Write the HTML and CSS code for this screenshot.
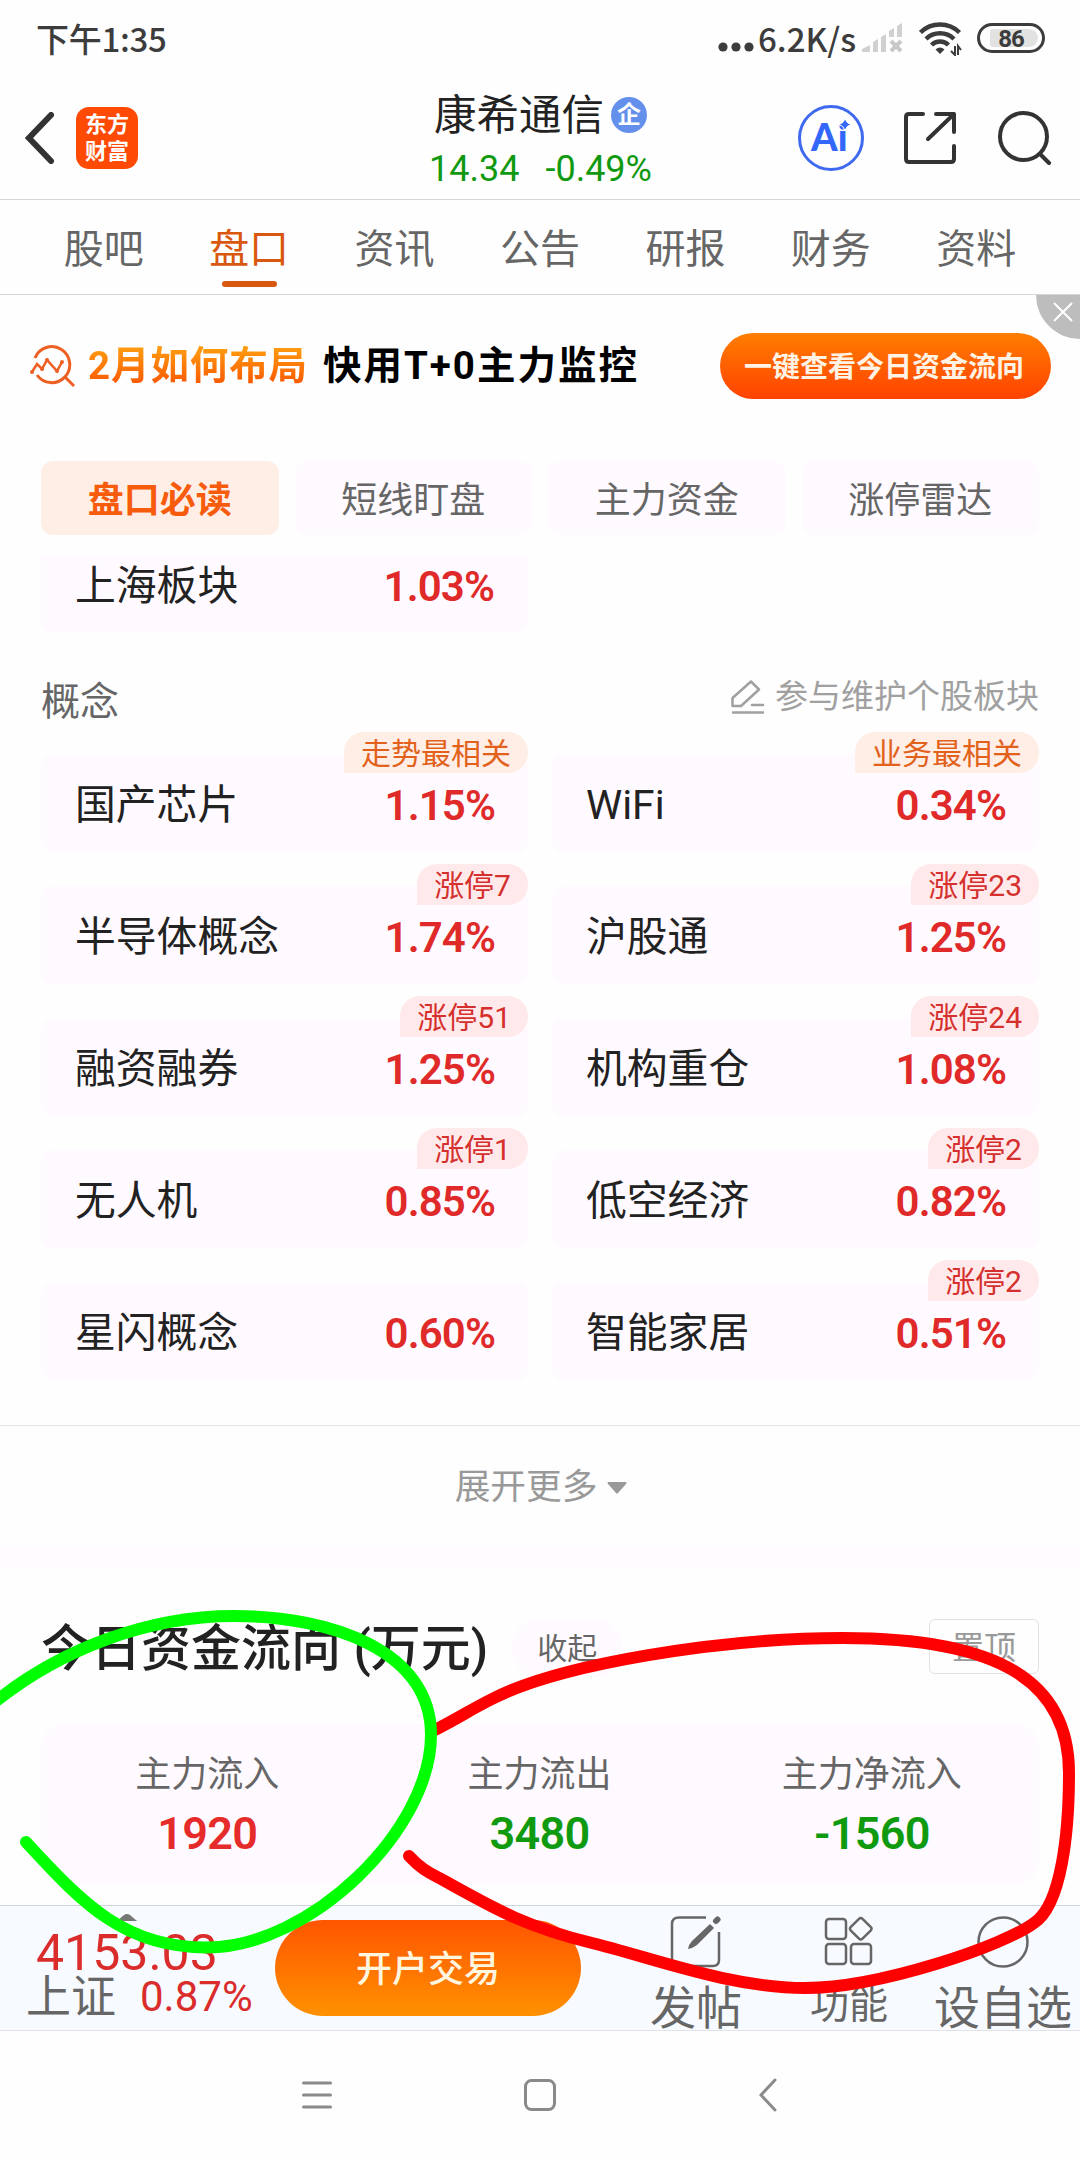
FILE: index.html
```html
<!DOCTYPE html>
<html lang="zh-CN">
<head>
	<meta charset="UTF-8">
	<meta name="viewport" content="width=device-width, initial-scale=1.0">
	<title>康希通信</title>
	<link rel="stylesheet" href="styles.css">
</head>
<body>
	<div class="status-bar">
		<span class="time">下午1:35</span>
		<div class="status-right">
			<svg class="dots" width="36" height="10" viewBox="0 0 36 10"><circle cx="5" cy="5" r="4.6"/><circle cx="18" cy="5" r="4.6"/><circle cx="31" cy="5" r="4.6"/></svg>
			<span class="speed">6.2K/s</span>
			<svg class="signal" width="41" height="30" viewBox="0 0 41 30">
				<path d="M0 29v-3l8-4v7zM11 29V19l5-3v13zM19 29V14l5-3v18zM27 14V8l5-3v9zM35 14V3l5-3v14z" fill="#d0d0d0"/>
				<path d="M29 18l10 10M39 18l-10 10" stroke="#c8c8c8" stroke-width="4"/>
			</svg>
			<svg class="wifi" width="43" height="34" viewBox="0 0 43 34" fill="none" stroke="#3c3c3c" stroke-width="4.5">
				<path d="M1.500 10.500A28 28 0 0 1 40.500 10.500M7 17A20 20 0 0 1 35 17M12.500 23A12 12 0 0 1 29.500 23"/>
				<path d="M16.500 27.500Q21 23.500 25.500 27.500L21 32z" fill="#3c3c3c" stroke="none"/>
				<path d="M36 24v9l-4-4M39 33v-9l3 4" stroke-width="2"/>
			</svg>
			<span class="battery"><span class="battery-fill">86</span></span>
		</div>
	</div>

	<header class="header">
		<div class="header-left">
			<svg width="30" height="52" viewBox="0 0 30 52" fill="none" stroke="#333" stroke-width="6" stroke-linecap="round" stroke-linejoin="miter"><path d="M26 3L4 26l22 23"/></svg>
			<div class="logo"><span>东方</span><span>财富</span></div>
		</div>
		<div class="stock">
			<div class="stock-name">康希通信<span class="ent">企</span></div>
			<div class="stock-price"><span>14.34</span><span>-0.49%</span></div>
		</div>
		<div class="header-right">
			<svg class="ai" width="66" height="66" viewBox="0 0 66 66">
				<circle cx="33" cy="33" r="31.500" fill="none" stroke="#3f6af0" stroke-width="3"/>
				<text x="13" y="46" font-size="38">Ai</text>
				<path d="M47 13.500q1.500 5 6 6q-4.500 1-6 6q-1.500-5-6-6q4.500-1 6-6z" fill="#3366fa" stroke="#fff" stroke-width="1"/>
			</svg>
			<svg class="share" width="54" height="54" viewBox="0 0 54 54" fill="none" stroke="#333" stroke-width="4" stroke-linecap="round" stroke-linejoin="round"><path d="M20 3H6Q3 3 3 6v42q0 3 3 3h42q3 0 3-3V35M33 3h18v18M51 3L25 28"/></svg>
			<svg class="search" width="54" height="54" viewBox="0 0 54 54" fill="none" stroke="#333" stroke-width="4" stroke-linecap="round"><circle cx="25.500" cy="25.500" r="23.500"/><path d="M42 43l9 9"/></svg>
		</div>
	</header>

	<nav class="tabs">
		<a>股吧</a>
		<a class="active">盘口</a>
		<a>资讯</a>
		<a>公告</a>
		<a>研报</a>
		<a>财务</a>
		<a>资料</a>
	</nav>

	<div class="banner">
		<svg class="banner-icon" width="46" height="44" viewBox="0 0 46 44" fill="none" stroke="#ee6022" stroke-width="3">
			<path d="M5 14A18 18 0 1 1 7 31M35 33l9 9"/>
			<path d="M2 28l5-8 5 5 5-9 10 11 5-9" stroke-width="2.500"/>
			<g fill="#ee6022" stroke="none"><circle cx="2" cy="28" r="2"/><circle cx="12" cy="25" r="2"/><circle cx="17" cy="16" r="2"/><circle cx="27" cy="27" r="2"/><circle cx="32" cy="18" r="2"/></g>
		</svg>
		<span class="banner-hot">2月如何布局</span>
		<span class="banner-text">快用T+0主力监控</span>
		<span class="banner-btn">一键查看今日资金流向</span>
		<span class="banner-close"><svg width="20" height="20" viewBox="0 0 20 20" stroke="#fff" stroke-width="2"><path d="M1 1l18 18M19 1L1 19"/></svg></span>
	</div>

	<div class="sub-tabs">
		<span class="active">盘口必读</span>
		<span>短线盯盘</span>
		<span>主力资金</span>
		<span>涨停雷达</span>
	</div>

	<div class="region">
		<div class="card cut"><span>上海板块</span><b>1.03%</b></div>
	</div>

	<div class="section-head">
		<span class="section-name">概念</span>
		<span class="edit">
			<svg width="34" height="34" viewBox="0 0 34 34" fill="none" stroke="#a0a0a0" stroke-width="2.500" stroke-linecap="round" stroke-linejoin="round"><path d="M1.500 26v-8L20 1.500l8 8L10 26zM21 25h11M2 32.500h30"/></svg>
			参与维护个股板块
		</span>
	</div>

	<div class="cards">
		<div class="card"><span>国产芯片</span><b>1.15%</b><i class="tag hot">走势最相关</i></div>
		<div class="card"><span>WiFi</span><b>0.34%</b><i class="tag hot">业务最相关</i></div>
		<div class="card"><span>半导体概念</span><b>1.74%</b><i class="tag">涨停7</i></div>
		<div class="card"><span>沪股通</span><b>1.25%</b><i class="tag">涨停23</i></div>
		<div class="card"><span>融资融券</span><b>1.25%</b><i class="tag">涨停51</i></div>
		<div class="card"><span>机构重仓</span><b>1.08%</b><i class="tag">涨停24</i></div>
		<div class="card"><span>无人机</span><b>0.85%</b><i class="tag">涨停1</i></div>
		<div class="card"><span>低空经济</span><b>0.82%</b><i class="tag">涨停2</i></div>
		<div class="card"><span>星闪概念</span><b>0.60%</b></div>
		<div class="card"><span>智能家居</span><b>0.51%</b><i class="tag">涨停2</i></div>
	</div>

	<div class="more">展开更多<svg width="20" height="12" viewBox="0 0 20 12"><path d="M1 0h18q1 1 0 2l-8 9q-1 1-2 0L1 2q-1-1 0-2z" fill="#999"/></svg></div>

	<div class="flow-head">
		<h2>今日资金流向 (万元)</h2>
		<span class="fold">收起</span>
		<span class="pin">置顶</span>
	</div>
	<div class="flow">
		<div><span>主力流入</span><b class="up">1920</b></div>
		<div><span>主力流出</span><b class="down">3480</b></div>
		<div><span>主力净流入</span><b class="down">-1560</b></div>
	</div>

	<div class="bottom-bar">
		<div class="index">
			<svg class="index-arrow" width="20" height="7" viewBox="0 0 20 7"><path d="M10 0q1.500 0 3 1l7 6H0l7-6q1.500-1 3-1z" fill="#777"/></svg>
			<div class="index-value">4153.03</div>
			<div class="index-line"><span>上证</span><em>0.87%</em></div>
		</div>
		<span class="open-btn">开户交易</span>
		<div class="action post">
			<svg width="52" height="52" viewBox="0 0 52 52" fill="none" stroke="#666" stroke-width="2.500"><path d="M36 1.500H9Q2 1.500 2 8v36q0 6 7 6h34q6 0 6-6V16"/><path d="M18 33q1-5 4-8L40 8l4 4-17 17q-4 3-9 4z" fill="#666" stroke="none"/><path d="M46 5l1.500-1.500" stroke-width="6" stroke-linecap="round"/></svg>
			<span>发帖</span>
		</div>
		<div class="action func">
			<svg width="50" height="50" viewBox="0 0 50 50" fill="none" stroke="#666" stroke-width="2.500"><rect x="2" y="3" width="20" height="20" rx="3"/><rect x="2" y="28" width="20" height="20" rx="3"/><rect x="27" y="28" width="20" height="20" rx="3"/><rect x="28.500" y="4.500" width="16.500" height="16.500" rx="2.500" transform="rotate(45 36.750 12.750)"/></svg>
			<span>功能</span>
		</div>
		<div class="action pick">
			<svg width="52" height="52" viewBox="0 0 52 52" fill="none" stroke="#666" stroke-width="2.500"><circle cx="26" cy="26" r="24.500"/><path d="M14 25l6 4" stroke-width="4" stroke-linecap="round"/></svg>
			<span>设自选</span>
		</div>
	</div>

	<div class="sys-nav">
		<svg width="30" height="34" viewBox="0 0 30 34" stroke="#8a8a8a" stroke-width="3" stroke-linecap="round"><path d="M1.500 5h27M1.500 17h27M1.500 29h27"/></svg>
		<svg width="34" height="34" viewBox="0 0 34 34" fill="none" stroke="#8a8a8a" stroke-width="3"><rect x="2.500" y="2.500" width="29" height="29" rx="6"/></svg>
		<svg width="18" height="34" viewBox="0 0 18 34" fill="none" stroke="#8a8a8a" stroke-width="3" stroke-linecap="round"><path d="M16 2L2 17l14 15"/></svg>
	</div>

	<!-- hand drawn circles -->
	<svg class="marks" width="1080" height="2160" viewBox="0 0 1080 2160">
		<path stroke="#ff0000" d="M435 1730C462 1716 470 1710 492 1699C560 1664 720 1638 843 1638C1000 1638 1069 1682 1069 1773C1069 1830 1062 1905 1034 1923C1005 1945 880 1988 805 1988C730 1988 650 1957 592 1943C530 1928 500 1912 443 1880C430 1873 422 1870 409 1856"/>
		<path stroke="#00ff00" d="M-10 1706C60 1648 150 1616 234 1616C330 1616 431 1650 431 1735C431 1830 310 1947.500 207 1947.500C125 1947.500 84 1905 26 1842"/>
	</svg>
</body>
</html>
```
FILE: styles.css
```css
* {
	box-sizing: border-box;
}

body {
	margin: 0;
	width: 1080px;
	height: 2160px;
	position: relative;
	overflow: hidden;
	background: #fefefe;
	color: #222;
	font-family: Roboto, "Noto Sans CJK SC", sans-serif;
	line-height: 1;
}

svg {
	display: block;
	flex: none;
}

b, em, i, h2 {
	font-style: normal;
	margin: 0;
}

/* status bar */
.status-bar {
	height: 76px;
	padding: 0 35px 0 36px;
	display: flex;
	align-items: center;
	justify-content: space-between;
	color: #3c3c3c;
}

.time {
	font: 500 33px/40px "Noto Sans CJK SC", sans-serif;
	letter-spacing: -0.300px;
}

.status-right {
	display: flex;
	align-items: center;
}

.dots {
	fill: #3c3c3c;
	margin: 18px 4px 0 0;
}

.speed {
	font: 500 33px/40px "Noto Sans CJK SC", sans-serif;
	width: 98px;
	margin-right: 6px;
	white-space: nowrap;
}

.signal {
	margin-right: 16px;
}

.wifi {
	margin: 2px 15px 0 0;
}

.battery {
	width: 68px;
	height: 30px;
	border: 3px solid #3c3c3c;
	border-radius: 15px;
	padding: 3px 3px 3px 10px;
}

.battery-fill {
	display: flex;
	align-items: center;
	justify-content: center;
	width: 48px;
	height: 18px;
	padding: 2px 6px 0 0;
	border-radius: 3px 9px 9px 3px;
	background: #e2e2e2;
	font-size: 24px;
	font-weight: 700;
	letter-spacing: -1px;
}

/* header */
.header {
	height: 124px;
	padding: 0 28px 0 25px;
	display: grid;
	grid-template-columns: 1fr auto 1fr;
	align-items: center;
	border-bottom: 1px solid #d6d6d6;
}

.header-left, .header-right {
	display: flex;
	align-items: center;
}

.header-right {
	justify-content: flex-end;
}

.logo {
	width: 62px;
	height: 62px;
	margin-left: 21px;
	border-radius: 13px;
	background: #ff4a05;
	color: #fff;
	display: flex;
	flex-direction: column;
	align-items: center;
	justify-content: center;
	font-size: 22px;
	line-height: 27px;
	font-weight: 700;
}

.stock {
	display: flex;
	flex-direction: column;
	align-items: center;
	padding: 10px 0 0 4px;
}

.stock-name {
	display: flex;
	align-items: center;
	height: 52px;
	padding-top: 2px;
	font-size: 42.500px;
}

.ent {
	width: 36px;
	height: 36px;
	margin: -3px 0 0 7px;
	border-radius: 50%;
	background: #6490ec;
	color: #fff;
	font-size: 24px;
	font-weight: 700;
	line-height: 36px;
	text-align: center;
}

.stock-price {
	display: flex;
	gap: 26px;
	height: 54px;
	align-items: center;
	font-size: 36px;
	color: #119911;
}

.ai text {
	font-family: Lato, sans-serif;
	font-weight: 900;
	fill: #3366fa;
}

.share {
	margin-left: 39px;
}

.search {
	margin-left: 41px;
}

/* main tabs */
.tabs {
	height: 95px;
	padding: 0 31px;
	display: grid;
	grid-template-columns: repeat(7, 1fr);
	border-bottom: 1px solid #d6d6d6;
	font-size: 40px;
	color: #666;
}

.tabs a {
	position: relative;
	display: flex;
	align-items: center;
	justify-content: center;
	padding-top: 5px;
}

.tabs .active {
	color: #d9580f;
}

.tabs .active::after {
	content: "";
	position: absolute;
	left: 46px;
	bottom: 7px;
	width: 55px;
	height: 6px;
	border-radius: 3px;
	background: #d9580f;
}

/* ad banner */
.banner {
	position: relative;
	height: 142px;
	padding: 0 29px 0 30px;
	display: flex;
	align-items: center;
	font-size: 38.500px;
	font-weight: 700;
	white-space: nowrap;
}

.banner-icon {
	margin-right: 12px;
}

.banner-hot {
	line-height: 50px;
	width: 221px;
	letter-spacing: 0.900px;
	background: linear-gradient(#ff9a10 15%, #fa5a00 85%);
	-webkit-background-clip: text;
	background-clip: text;
	color: transparent;
}

.banner-text {
	margin-left: 14px;
	letter-spacing: 2px;
	color: #000;
}

.banner-btn {
	margin-left: auto;
	width: 331px;
	height: 66px;
	padding-right: 3px;
	border-radius: 33px;
	background: linear-gradient(#ff7d00, #ff4200);
	color: #fff3e6;
	font-size: 28px;
	line-height: 69px;
	text-align: center;
}

.banner-close {
	position: absolute;
	top: 0;
	right: 0;
	width: 44px;
	height: 44px;
	padding: 7px 0 0 17px;
	border-radius: 0 0 0 44px;
	background: #bdbdbd;
}

.sub-tabs {
	margin-top: 24px;
	padding: 0 41px;
	display: grid;
	grid-template-columns: repeat(4, 1fr);
	gap: 16px;
	font-size: 36px;
	color: #666;
}

.sub-tabs span {
	height: 74px;
	border-radius: 12px;
	background: #fefaff;
	line-height: 80px;
	text-align: center;
}

.sub-tabs .active {
	background: #ffeee6;
	color: #f75b0c;
	font-weight: 700;
}

/* block cards */
.region {
	padding: 21px 41px 0;
}

.card {
	position: relative;
	width: 487px;
	height: 99px;
	padding: 4px 33px 0 34px;
	border-radius: 12px;
	background: #fefaff;
	display: flex;
	align-items: center;
	justify-content: space-between;
	font-size: 40.800px;
}

.card.cut {
	height: 77px;
	padding: 0 34px 16px;
	border-radius: 0 0 12px 12px;
}

.card b {
	font-size: 42px;
	font-weight: 600;
	letter-spacing: -0.900px;
	color: #e02a2a;
}

.tag {
	position: absolute;
	top: -22px;
	right: 0;
	height: 41px;
	padding: 0 17px;
	border-radius: 20px 20px 20px 0;
	background: #ffe9eb;
	color: #d5302d;
	font-size: 30px;
	line-height: 44px;
}

.tag.hot {
	background: #ffeee6;
	color: #e2611b;
}

.section-head {
	height: 121px;
	padding: 0 41px;
	display: flex;
	justify-content: space-between;
	align-items: center;
}

.section-name {
	font-size: 39px;
	color: #666;
	padding-top: 18px;
}

.edit {
	display: flex;
	align-items: center;
	gap: 10px;
	padding-top: 6px;
	font-size: 33px;
	color: #a0a0a0;
}

.cards {
	padding: 0 41px;
	display: grid;
	grid-template-columns: 487px 487px;
	gap: 33px 24px;
}

.more {
	margin-top: 44px;
	height: 144px;
	padding: 3px 0 0 2px;
	border-top: 1px solid #e4e4e4;
	border-bottom: 22px solid #fffbff;
	display: flex;
	align-items: center;
	justify-content: center;
	gap: 10px;
	font-size: 35.700px;
	color: #999;
}

/* money flow */
.flow-head {
	height: 155px;
	padding: 2px 41px 0;
	display: flex;
	align-items: center;
}

.flow-head h2 {
	padding-top: 3px;
	font-size: 50px;
	font-weight: 500;
}

.fold {
	margin-left: 23px;
	width: 112px;
	height: 58px;
	border-radius: 29px;
	background: #fefaff;
	font-size: 30px;
	line-height: 60px;
	text-align: center;
	color: #666;
}

.pin {
	margin: -2px 0 0 auto;
	width: 110px;
	height: 55px;
	border: 1px solid #e2e2e2;
	border-radius: 6px;
	font-size: 32px;
	line-height: 57px;
	text-align: center;
	color: #999;
}

.flow {
	margin: 0 41px;
	height: 160px;
	padding-right: 1px;
	border-radius: 24px;
	background: #fefaff;
	display: grid;
	grid-template-columns: repeat(3, 1fr);
	text-align: center;
}

.flow div {
	display: flex;
	flex-direction: column;
	padding-top: 30px;
}

.flow span {
	font-size: 36px;
	line-height: 42px;
	color: #666;
}

.flow b {
	margin-top: 12px;
	font-size: 45px;
	line-height: 52px;
	font-weight: 600;
	letter-spacing: -0.700px;
}

.up {
	color: #e62b2b;
}

.down {
	color: #109a10;
}

/* bottom bar */
.bottom-bar {
	margin-top: 21px;
	height: 126px;
	border-top: 1px solid #cfd6df;
	border-bottom: 1px solid #e2e2e8;
	background: #f7faff;
	display: flex;
	color: #666;
}

.index {
	position: relative;
	width: 275px;
	padding: 23px 0 0 26px;
	color: #db2c2c;
}

.index-arrow {
	position: absolute;
	left: 117px;
	top: 8px;
}

.index-value {
	padding-left: 10px;
	font-size: 50px;
	line-height: 48px;
}

.index-line {
	display: flex;
	align-items: center;
	height: 40px;
	font-size: 42px;
}

.index-line span {
	width: 114px;
	font-size: 45px;
	color: #666;
}

.open-btn {
	width: 306px;
	height: 96px;
	margin-top: 14px;
	border-radius: 48px;
	background: linear-gradient(#ff5500, #ff9100);
	color: #fff6e0;
	font-size: 36px;
	font-weight: 500;
	line-height: 101px;
	text-align: center;
}

.action {
	display: flex;
	flex-direction: column;
	align-items: center;
	padding-top: 10px;
	white-space: nowrap;
}

.action span {
	font-size: 46px;
	line-height: 46px;
	margin-top: 17px;
}

.post {
	width: 92px;
	margin-left: 69px;
}

.func {
	width: 78px;
	margin-left: 68px;
}

.func span {
	font-size: 39px;
	line-height: 39px;
	margin-top: 20px;
}

.pick {
	width: 138px;
	margin-left: 46px;
}

.sys-nav {
	height: 128px;
	display: flex;
	align-items: center;
	justify-content: center;
	gap: 202px;
	padding-right: 2px;
}

.sys-nav svg:first-child {
	margin-right: -11px;
}

/* drawn over the page */
.marks {
	position: absolute;
	left: 0;
	top: 0;
	fill: none;
	stroke-width: 12px;
	stroke-linecap: round;
}
```
